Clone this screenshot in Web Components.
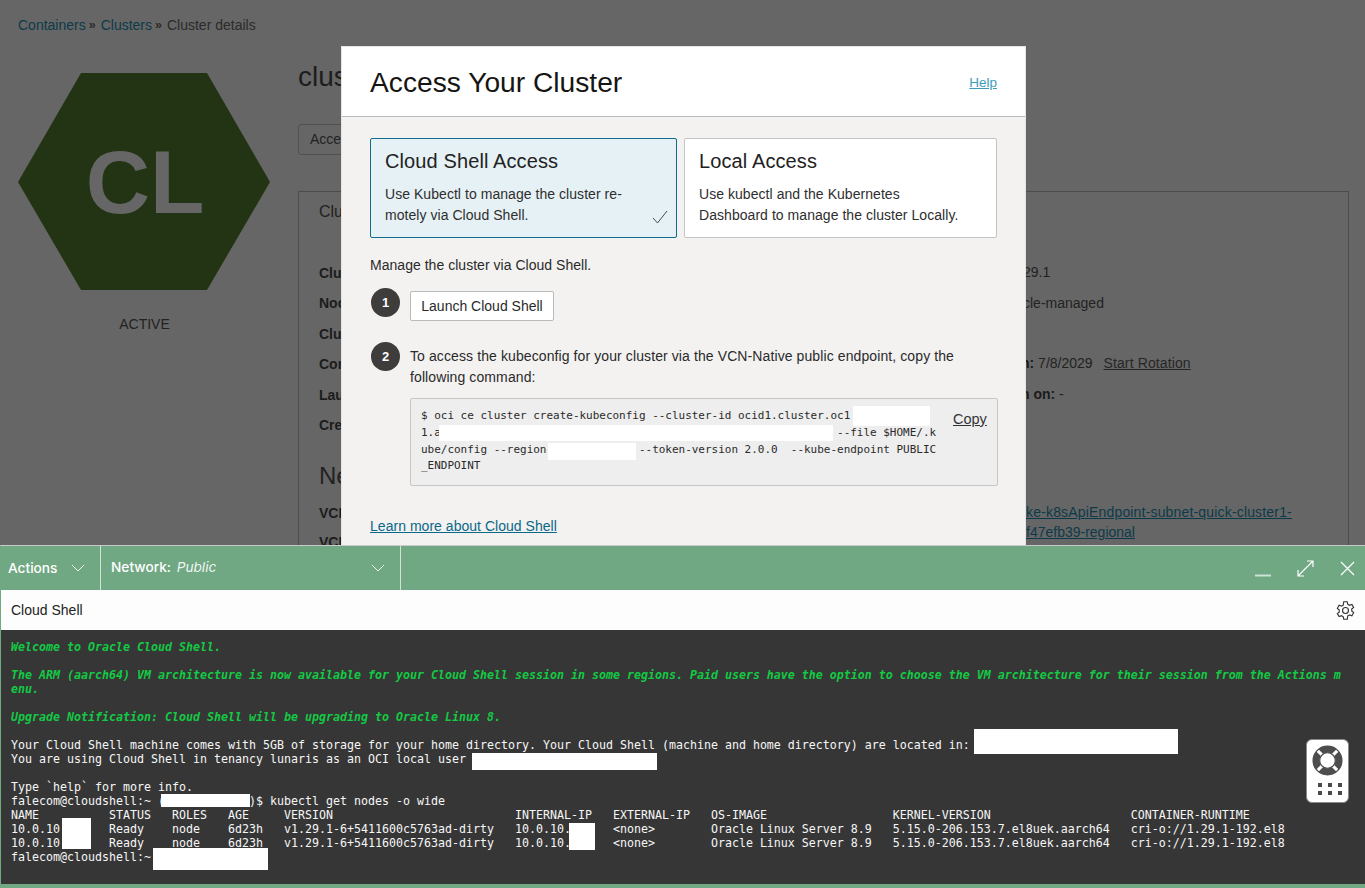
<!DOCTYPE html>
<html lang="en">
<head>
<meta charset="utf-8">
<title>Cluster details</title>
<style>
  html, body { margin: 0; height: 888px; overflow: hidden; background: #666; }
  body { position: relative; font-family: "Liberation Sans", Arial, sans-serif; font-size: 14px; }
</style>
</head>
<body>
  <console-page></console-page>

  <access-modal>
    <option-card selected>
      <span slot="title">Cloud Shell Access</span>
      Use Kubectl to manage the cluster re-<br>motely via Cloud Shell.
    </option-card>
    <option-card>
      <span slot="title">Local Access</span>
      Use kubectl and the Kubernetes<br>Dashboard to manage the cluster Locally.
    </option-card>
  </access-modal>

  <cloud-shell></cloud-shell>

<script>
class ConsolePage extends HTMLElement {
  static name = 'console-page'

  static get style() {
    return /* css */`
    :host {
      display: block;
      height: 888px;
      background: #666;
      color: #222;
      font-size: 14px;
      overflow: hidden;
    }
    a { color: #0d3a49; text-decoration: none; }

    .crumbs {
      display: flex;
      align-items: center;
      height: 20px;
      padding: 15px 0 0 18px;
      color: #2b2b2b;
    }
    .crumbs i { font-style: normal; font-weight: 700; margin: 0 5px 0 3px; font-size: 12.5px; color: #2b2b2b; }

    .main {
      display: grid;
      grid-template-columns: 280px 1fr;
      padding: 38px 16px 0 18px;
    }

    .hex svg { display: block; }
    .hex text { font-family: "Liberation Sans", Arial, sans-serif; font-weight: 700; font-size: 89px; fill: #666; }
    .status { width: 253px; margin-top: 25px; text-align: center; color: #222; }

    h1 { margin: -14px 0 0; font-weight: 400; font-size: 28px; line-height: 36px; color: #1d1d1d; }
    .acts {
      display: inline-block;
      box-sizing: border-box;
      width: 60px;
      height: 31px;
      margin-top: 29px;
      padding-left: 11px;
      line-height: 29px;
      border: 1px solid #505050;
      border-radius: 3px;
    }

    .panel {
      box-sizing: border-box;
      height: 420px;
      margin-top: 36px;
      padding: 9px 0 0 20px;
      border: 1px solid #4c4c4c;
    }
    .tab { font-size: 16px; line-height: 22px; color: #1f1f1f; }
    .cols { display: grid; grid-template-columns: 707px 1fr; margin-top: 40px; }
    .row { height: 30.4px; line-height: 20px; white-space: nowrap; }
    .row b { color: #1c1c1c; }
    .row u { margin-left: 7px; color: #262626; letter-spacing: .12px; }
    .right { margin: -1px 0 0 -3px; }
    .shift { margin-left: -2px; }
    .managed { padding-top: 1px; height: 29.4px; }
    .sub { margin-top: 16px; font-size: 24px; line-height: 30px; color: #222; }
    .lnk { margin: 58px 0 0 3px; }
    .lnk a { display: block; line-height: 20px; text-decoration: underline; }
    .lnk a:first-child { letter-spacing: .17px; }
    .vc { margin-top: 8px; line-height: 29px; font-weight: 700; color: #1c1c1c; }
    `
  }

  connectedCallback() {
    this.attachShadow({ mode: 'open' }).innerHTML = /* html */`
    <style>${ConsolePage.style}</style>
    <nav class="crumbs">
      <a href="#">Containers</a><i>&raquo;</i><a href="#">Clusters</a><i>&raquo;</i><span>Cluster details</span>
    </nav>
    <div class="main">
      <div>
        <div class="hex">
          <svg width="252" height="218" viewBox="0 0 252 218">
            <polygon points="0,109 63,0 189,0 252,109 189,217 63,217" fill="#223414"/>
            <text x="127" y="140" text-anchor="middle">CL</text>
          </svg>
        </div>
        <div class="status">ACTIVE</div>
      </div>
      <div>
        <h1>clus</h1>
        <span class="acts">Acce</span>
        <div class="panel">
          <div class="tab">Clu</div>
          <div class="cols">
            <div>
              <div class="row"><b>Clu</b></div>
              <div class="row"><b>Noc</b></div>
              <div class="row"><b>Clu</b></div>
              <div class="row"><b>Con</b></div>
              <div class="row"><b>Lau</b></div>
              <div class="row"><b>Cre</b></div>
              <div class="sub">Ne</div>
              <div class="vc">VCI<br>VCI</div>
            </div>
            <div class="right">
              <div class="row">29.1</div>
              <div class="row managed">cle-managed</div>
              <div class="row">&nbsp;</div>
              <div class="row shift"><b>n:</b> 7/8/2029 <u>Start Rotation</u></div>
              <div class="row shift"><b>n on:</b> -</div>
              <div class="row">&nbsp;</div>
              <div class="lnk">
                <a href="#">ke-k8sApiEndpoint-subnet-quick-cluster1-</a>
                <a href="#">f47efb39-regional</a>
              </div>
            </div>
          </div>
        </div>
      </div>
    </div>`
  }
}

class OptionCard extends HTMLElement {
  static name = 'option-card'

  static get style() {
    return /* css */`
    :host {
      display: block;
      position: relative;
      box-sizing: border-box;
      height: 100px;
      padding: 10px 14px 0;
      background: #fff;
      border: 1px solid #c4c4c4;
      border-radius: 2px;
      font-size: 14px;
      line-height: 21px;
      letter-spacing: .05px;
      color: #2e2e2e;
    }
    :host([selected]) {
      background: #e6f1f5;
      border-color: #0f6a8f;
    }
    .title { font-size: 20px; line-height: 24px; margin-bottom: 11px; letter-spacing: .11px; color: #222; }
    svg { display: none; position: absolute; right: 8px; bottom: 13px; }
    :host([selected]) svg { display: block; }
    `
  }

  connectedCallback() {
    this.attachShadow({ mode: 'open' }).innerHTML = /* html */`
    <style>${OptionCard.style}</style>
    <div class="title"><slot name="title"></slot></div>
    <slot></slot>
    <svg width="16" height="14" viewBox="0 0 16 14"><path d="M1 8 L5.5 13 L15 1" fill="none" stroke="#4a4a4a" stroke-width="1"/></svg>`
  }
}

class AccessModal extends HTMLElement {
  static name = 'access-modal'

  static get style() {
    return /* css */`
    :host {
      display: block;
      position: absolute;
      left: 341px;
      top: 46px;
      box-sizing: border-box;
      width: 685px;
      height: 620px;
      background: #f3f2f1;
      border: 1px solid #e4e4e4;
      font-size: 14px;
      color: #2a2a2a;
    }
    a { color: #0a6888; }
    header {
      display: flex;
      justify-content: space-between;
      align-items: center;
      box-sizing: border-box;
      height: 70px;
      padding: 2px 28px 0 28px;
      background: #fff;
      border-bottom: 1px solid #b9b9b9;
    }
    h2 { margin: 0; font-weight: 400; font-size: 28.2px; color: #161513; }
    header a { color: #3f9bbb; font-size: 13.5px; }
    .body { padding: 21px 27px 0 28px; }
    .cards { display: grid; grid-template-columns: 307px 313px; gap: 7px; }
    .lead { margin: 17px 0 0; line-height: 21px; letter-spacing: .03px; }
    .step { display: flex; gap: 10px; margin-top: 12px; margin-left: 1px; }
    .step + .step { margin-top: 21px; }
    .num {
      flex: none;
      width: 29px;
      height: 29px;
      border-radius: 50%;
      background: #3f3d3b;
      color: #fff;
      font-weight: 700;
      font-size: 13px;
      line-height: 29px;
      text-align: center;
    }
    .launch {
      box-sizing: border-box;
      width: 144px;
      height: 30px;
      margin-top: 3px;
      background: #fff;
      border: 1px solid #b9b9b9;
      border-radius: 2px;
      font: inherit;
      color: #2a2a2a;
      padding: 0;
    }
    .text { padding-top: 4px; line-height: 21px; flex: 1; letter-spacing: .1px; }
    .cmd {
      position: relative;
      box-sizing: border-box;
      height: 88px;
      margin-top: 10px;
      padding: 9px 0 0 10px;
      background: #eeeeee;
      border: 1px solid #c6c6c6;
      border-radius: 2px;
      letter-spacing: 0;
    }
    pre {
      margin: 0;
      font: 10.98px/16.8px "DejaVu Sans Mono", monospace;
      color: #2a2a2a;
    }
    .copy { position: absolute; left: 542px; top: 10px; color: #333; font-size: 14.5px; line-height: 20px; }
    .more { display: block; margin-top: 30px; line-height: 21px; width: max-content; letter-spacing: .03px; }
    .mask { position: absolute; background: #fff; }
    `
  }

  connectedCallback() {
    this.attachShadow({ mode: 'open' }).innerHTML = /* html */`
    <style>${AccessModal.style}</style>
    <header>
      <h2>Access Your Cluster</h2>
      <a href="#">Help</a>
    </header>
    <div class="body">
      <div class="cards"><slot></slot></div>
      <p class="lead">Manage the cluster via Cloud Shell.</p>
      <div class="step">
        <span class="num">1</span>
        <button class="launch">Launch Cloud Shell</button>
      </div>
      <div class="step">
        <span class="num">2</span>
        <div class="text">
          To access the kubeconfig for your cluster via the VCN-Native public endpoint, copy the<br>following command:
          <div class="cmd">
            <pre>$ oci ce cluster create-kubeconfig --cluster-id ocid1.cluster.oc1
1.a                                                            --file $HOME/.k
ube/config --region              --token-version 2.0.0  --kube-endpoint PUBLIC
_ENDPOINT</pre>
            <a class="copy" href="#">Copy</a>
            <span class="mask" style="left:442px;top:7px;width:77px;height:20px"></span>
            <span class="mask" style="left:28px;top:26px;width:394px;height:16px"></span>
            <span class="mask" style="left:137px;top:44px;width:88px;height:17px"></span>
          </div>
        </div>
      </div>
      <a class="more" href="#">Learn more about Cloud Shell</a>
    </div>`
  }
}

class HelpWidget extends HTMLElement {
  static name = 'help-widget'

  static get style() {
    return /* css */`
    :host {
      display: block;
      position: absolute;
      right: 16px;
      top: 109px;
      box-sizing: border-box;
      width: 43px;
      height: 64px;
      background: #fff;
      border: 1px solid #8a8a8a;
      border-radius: 6px;
      padding: 5px 0 0 5px;
    }
    svg { display: block; }
    .dots { display: grid; grid-template-columns: repeat(3, 4px); gap: 4px 6px; margin: 7px 0 0 6px; }
    .dots i { height: 4px; background: #4a4a4a; }
    `
  }

  connectedCallback() {
    this.attachShadow({ mode: 'open' }).innerHTML = /* html */`
    <style>${HelpWidget.style}</style>
    <svg width="31" height="31" viewBox="0 0 32 32">
      <circle cx="16" cy="16" r="11.5" fill="none" stroke="#4d4d4d" stroke-width="7"/>
      <path d="M5 5 L11 11 M27 5 L21 11 M5 27 L11 21 M27 27 L21 21" stroke="#fff" stroke-width="3.2"/>
      <circle cx="16" cy="16" r="14.8" fill="none" stroke="#4d4d4d" stroke-width="1.4"/>
      <circle cx="16" cy="16" r="8" fill="#fff" stroke="#4d4d4d" stroke-width="1.2"/>
    </svg>
    <div class="dots"><i></i><i></i><i></i><i></i><i></i><i></i></div>`
  }
}

class ShellTerminal extends HTMLElement {
  static name = 'shell-terminal'

  static get style() {
    return /* css */`
    :host {
      display: block;
      position: relative;
      flex: 1;
      box-sizing: border-box;
      padding: 10px 0 0 10px;
      background: #363636;
      overflow: hidden;
    }
    pre {
      margin: 0;
      font: 11.64px/14px "DejaVu Sans Mono", monospace;
      color: #f6f6f6;
    }
    .g { color: #14c944; font-weight: 700; font-style: italic; }
    .mask { position: absolute; background: #fff; }
    `
  }

  connectedCallback() {
    this.attachShadow({ mode: 'open' }).innerHTML = /* html */`
    <style>${ShellTerminal.style}</style>
    <pre><span class="g">Welcome to Oracle Cloud Shell.

The ARM (aarch64) VM architecture is now available for your Cloud Shell session in some regions. Paid users have the option to choose the VM architecture for their session from the Actions m
enu.

Upgrade Notification: Cloud Shell will be upgrading to Oracle Linux 8.</span>

Your Cloud Shell machine comes with 5GB of storage for your home directory. Your Cloud Shell (machine and home directory) are located in:
You are using Cloud Shell in tenancy lunaris as an OCI local user

Type \`help\` for more info.
falecom@cloudshell:~ (            )$ kubectl get nodes -o wide
NAME          STATUS   ROLES   AGE     VERSION                          INTERNAL-IP   EXTERNAL-IP   OS-IMAGE                  KERNEL-VERSION                    CONTAINER-RUNTIME
10.0.10       Ready    node    6d23h   v1.29.1-6+5411600c5763ad-dirty   10.0.10.      &lt;none&gt;        Oracle Linux Server 8.9   5.15.0-206.153.7.el8uek.aarch64   cri-o://1.29.1-192.el8
10.0.10       Ready    node    6d23h   v1.29.1-6+5411600c5763ad-dirty   10.0.10.      &lt;none&gt;        Oracle Linux Server 8.9   5.15.0-206.153.7.el8uek.aarch64   cri-o://1.29.1-192.el8
falecom@cloudshell:~</pre>
    <span class="mask" style="left:973px;top:99px;width:204px;height:25px"></span>
    <span class="mask" style="left:471px;top:123px;width:185px;height:17px"></span>
    <span class="mask" style="left:160px;top:164px;width:89px;height:13px"></span>
    <span class="mask" style="left:61px;top:188px;width:29px;height:31px"></span>
    <span class="mask" style="left:568px;top:193px;width:26px;height:27px"></span>
    <span class="mask" style="left:152px;top:218px;width:115px;height:22px"></span>
    <help-widget></help-widget>`
  }
}

class CloudShell extends HTMLElement {
  static name = 'cloud-shell'

  static get style() {
    return /* css */`
    :host {
      display: flex;
      flex-direction: column;
      position: absolute;
      left: 0;
      right: 0;
      bottom: 0;
      height: 343px;
      box-sizing: border-box;
      background: #70a883;
      border-top: 1px solid #c9c9c9;
      border-left: 1px solid #70a883;
      border-bottom: 4px solid #70a883;
      font-family: "Liberation Sans", Arial, sans-serif;
    }
    .bar {
      display: flex;
      flex: none;
      height: 44px;
      color: #fff;
      font: 500 13.7px/44px Inter, "Liberation Sans", sans-serif;
    }
    .menu {
      display: flex;
      justify-content: space-between;
      align-items: center;
      box-sizing: border-box;
      border-right: 1px solid #d4e3d9;
    }
    .menu.a { width: 100px; padding: 0 15px 0 7px; }
    .menu.b { width: 300px; padding: 0 15px 0 10px; }
    .menu.b span { margin-top: -2px; }
    .menu em { font-weight: 400; margin-left: 2px; opacity: .9; }
    .tools { display: flex; align-items: center; gap: 26px; margin-left: auto; padding-right: 10px; }
    .title {
      display: flex;
      flex: none;
      justify-content: space-between;
      align-items: center;
      height: 40px;
      padding: 0 9px 0 10px;
      background: #fdfdfd;
      font-size: 14px;
      color: #222;
    }
    svg { display: block; }
    `
  }

  connectedCallback() {
    const chev = '<svg width="14" height="8" viewBox="0 0 14 8"><path d="M1 1 L7 7 L13 1" fill="none" stroke="#eef5f0" stroke-width="1"/></svg>'
    this.attachShadow({ mode: 'open' }).innerHTML = /* html */`
    <style>${CloudShell.style}</style>
    <div class="bar">
      <div class="menu a"><span>Actions</span>${chev}</div>
      <div class="menu b"><span>Network: <em>Public</em></span>${chev}</div>
      <div class="tools">
        <svg width="17" height="17" viewBox="0 0 17 17"><path d="M1 15.5 H17" stroke="#cfe0d5" stroke-width="2"/></svg>
        <svg width="17" height="17" viewBox="0 0 17 17"><path d="M1 16 L16 1 M10 1 H16 V7 M1 10 V16 H7" fill="none" stroke="#fff" stroke-width="1.2"/></svg>
        <svg width="15" height="15" viewBox="0 0 15 15"><path d="M1 1 L14 14 M14 1 L1 14" stroke="#fff" stroke-width="1.2"/></svg>
      </div>
    </div>
    <div class="title">
      <span>Cloud Shell</span>
      <svg width="21" height="21" viewBox="0 0 24 24" fill="none" stroke="#333" stroke-width="1.3">
        <circle cx="12" cy="12" r="3.4"/>
        <path d="M10 2 h4 l.6 2.9 a7.5 7.5 0 0 1 1.9 1.1 l2.8-1 2 3.5 -2.2 1.9 a7.5 7.5 0 0 1 0 2.2 l2.2 1.9 -2 3.5 -2.8-1 a7.5 7.5 0 0 1 -1.9 1.1 L14 22 h-4 l-.6-2.9 a7.5 7.5 0 0 1 -1.9-1.1 l-2.8 1 -2-3.5 2.2-1.9 a7.5 7.5 0 0 1 0-2.2 L2.7 9.5 l2-3.5 2.8 1 a7.5 7.5 0 0 1 1.9-1.1 Z"/>
      </svg>
    </div>
    <shell-terminal></shell-terminal>`
  }
}

customElements.define(ConsolePage.name, ConsolePage)
customElements.define(OptionCard.name, OptionCard)
customElements.define(AccessModal.name, AccessModal)
customElements.define(HelpWidget.name, HelpWidget)
customElements.define(ShellTerminal.name, ShellTerminal)
customElements.define(CloudShell.name, CloudShell)
</script>
</body>
</html>
